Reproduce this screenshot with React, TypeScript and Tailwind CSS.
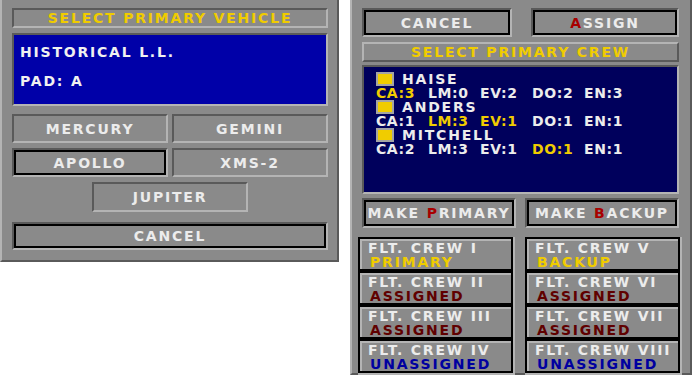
import type { ReactNode } from 'react'

const inset =
  'border-2 border-t-[#5a5a5a] border-l-[#5a5a5a] border-b-[#b4b4b4] border-r-[#b4b4b4]'
const outset =
  'border-2 border-t-[#b4b4b4] border-l-[#b4b4b4] border-b-[#5a5a5a] border-r-[#5a5a5a]'

function Btn({
  children,
  black = false,
  className = '',
}: {
  children: ReactNode
  black?: boolean
  className?: string
}) {
  return (
    <div className={`${inset} ${className}`}>
      <div
        className={`h-full flex items-center justify-center text-[#ececec] ${
          black ? 'border-2 border-black' : ''
        }`}
      >
        {children}
      </div>
    </div>
  )
}

const Key = ({ children }: { children: ReactNode }) => (
  <span className="text-[#a80000]">{children}</span>
)

type Stat = { label: string; hi?: boolean }

const crew: { name: string; stats: Stat[] }[] = [
  {
    name: 'HAISE',
    stats: [
      { label: 'CA:3', hi: true },
      { label: 'LM:0' },
      { label: 'EV:2' },
      { label: 'DO:2' },
      { label: 'EN:3' },
    ],
  },
  {
    name: 'ANDERS',
    stats: [
      { label: 'CA:1' },
      { label: 'LM:3', hi: true },
      { label: 'EV:1', hi: true },
      { label: 'DO:1' },
      { label: 'EN:1' },
    ],
  },
  {
    name: 'MITCHELL',
    stats: [
      { label: 'CA:2' },
      { label: 'LM:3' },
      { label: 'EV:1' },
      { label: 'DO:1', hi: true },
      { label: 'EN:1' },
    ],
  },
]

const statusColor: Record<string, string> = {
  PRIMARY: 'text-[#f0cc00]',
  BACKUP: 'text-[#f0cc00]',
  ASSIGNED: 'text-[#600000]',
  UNASSIGNED: 'text-[#0000a0]',
}

const flights = [
  [
    ['I', 'PRIMARY'],
    ['II', 'ASSIGNED'],
    ['III', 'ASSIGNED'],
    ['IV', 'UNASSIGNED'],
  ],
  [
    ['V', 'BACKUP'],
    ['VI', 'ASSIGNED'],
    ['VII', 'ASSIGNED'],
    ['VIII', 'UNASSIGNED'],
  ],
]

export default function App() {
  return (
    <div className="w-[692px] h-[375px] bg-white flex items-start font-['DejaVu_Sans',sans-serif] font-bold text-[14px] leading-[14px] tracking-[1.8px] overflow-hidden">
      {/* vehicle panel */}
      <div className="w-[339px] h-[262px] shrink-0 bg-[#8a8a8a] border-l-2 border-l-[#b4b4b4] border-r-2 border-r-[#5a5a5a] border-b-2 border-b-[#5a5a5a] pt-2 pl-[10px] pr-[9px] flex flex-col">
        <div className={`${inset} h-[20px] flex items-center justify-center text-[#f0cc00]`}>
          SELECT PRIMARY VEHICLE
        </div>
        <div className={`${inset} mt-[5px] h-[73px] bg-[#0000a8] pl-[6px] pt-[10px] text-[#f0f0f0]`}>
          <div>HISTORICAL L.L.</div>
          <div className="mt-[15px]">PAD: A</div>
        </div>
        <div className="mt-[8px] grid grid-cols-2 gap-x-1 gap-y-[5px]">
          <Btn className="h-[29px]">MERCURY</Btn>
          <Btn className="h-[29px]">GEMINI</Btn>
          <Btn className="h-[29px]" black>
            APOLLO
          </Btn>
          <Btn className="h-[29px]">XMS-2</Btn>
        </div>
        <Btn className="mt-[5px] mx-auto w-[156px] h-[30px]">JUPITER</Btn>
        <Btn className="mt-[10px] h-[28px]" black>
          CANCEL
        </Btn>
      </div>

      {/* crew panel */}
      <div className="ml-[11px] w-[342px] h-[375px] shrink-0 bg-[#8a8a8a] border-l-2 border-l-[#b4b4b4] border-r-2 border-r-[#5a5a5a] border-b-2 border-b-[#5a5a5a] pt-2 pl-[6px] pr-[8px] flex flex-col">
        <div className="pl-1 pr-[3px] flex flex-col">
          <div className="flex justify-between">
            <Btn className="w-[150px] h-[29px]" black>
              CANCEL
            </Btn>
            <Btn className="w-[148px] h-[29px]" black>
              <span>
                <Key>A</Key>SSIGN
              </span>
            </Btn>
          </div>
          <div className={`${outset} mt-[5px] h-[20px] flex items-center justify-center text-[#f0cc00]`}>
            SELECT PRIMARY CREW
          </div>
          <div className={`${inset} mt-[3px] h-[129px] bg-[#00005c] pl-[12px] pt-[5px] text-[#ececec]`}>
            {crew.map((c) => (
              <div key={c.name}>
                <div className="flex items-center h-[14px]">
                  <span className="w-[18px] h-[14px] border-2 border-[#a4a4a4] bg-[#f0cc00]" />
                  <span className="ml-2">{c.name}</span>
                </div>
                <div className="flex h-[14px] tracking-[0.6px]">
                  {c.stats.map((s) => (
                    <span key={s.label} className={`w-[52px] ${s.hi ? 'text-[#f0cc00]' : ''}`}>
                      {s.label}
                    </span>
                  ))}
                </div>
              </div>
            ))}
          </div>
          <div className="mt-[4px] grid grid-cols-2 gap-[9px]">
            <Btn className="h-[30px]" black>
              <span>
                MAKE <Key>P</Key>RIMARY
              </span>
            </Btn>
            <Btn className="h-[30px]" black>
              <span>
                MAKE <Key>B</Key>ACKUP
              </span>
            </Btn>
          </div>
        </div>

        <div className="mt-[9px] grid grid-cols-2 gap-[10px] h-[131px]">
          {flights.map((col, i) => (
            <div key={i} className="flex flex-col border-r-2 border-r-[#b4b4b4] border-b-2 border-b-[#b4b4b4]">
              {col.map(([num, status]) => (
                <div key={num} className="flex-1 border-2 border-black">
                  <div className="h-full border-t-2 border-l-2 border-[#b4b4b4] pl-[6px]">
                    <div className="text-[#ececec]">FLT. CREW {num}</div>
                    <div className={`pl-[2px] ${statusColor[status]}`}>{status}</div>
                  </div>
                </div>
              ))}
            </div>
          ))}
        </div>
      </div>
    </div>
  )
}
